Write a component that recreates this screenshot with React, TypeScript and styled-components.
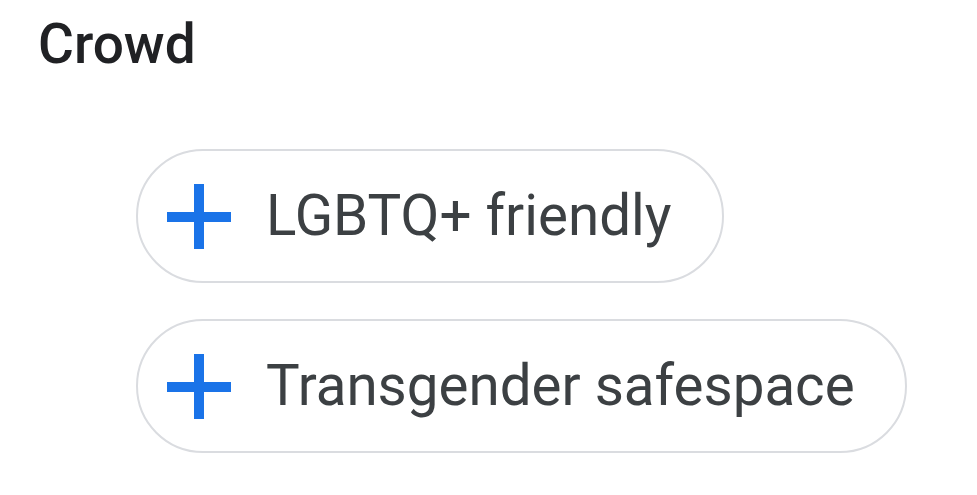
import styled, { createGlobalStyle } from "styled-components";

const GlobalStyle = createGlobalStyle`
    body {
        margin: 0;
        background: #fff;
        font-family: Roboto, "Noto Sans", Arial, sans-serif;
    }
`

const Page = styled.div`
    padding: 17px 0 0 38px;
`

const Heading = styled.h2`
    margin: 0;
    font-size: 55px;
    line-height: 55px;
    font-weight: 500;
    color: #202124;
`

const ChipList = styled.div`
    display: flex;
    flex-direction: column;
    align-items: flex-start;
    gap: 36px;
    margin: 77px 0 0 98px;
`

const Chip = styled.button`
    display: inline-flex;
    align-items: center;
    gap: 35px;
    box-sizing: border-box;
    height: 134px;
    padding: 0 50px 0 29px;
    border: 2px solid #dadce0;
    border-radius: 67px;
    background: #fff;
    font-family: Roboto, "Noto Sans", Arial, sans-serif;
    font-size: 56.5px;
    color: #3c4043;
    cursor: pointer;
`

const PlusIcon = () => (
    <svg width="64" height="65" viewBox="0 0 64 65">
        <rect x="27" y="0" width="10" height="65" fill="#1a73e8" />
        <rect x="0" y="28" width="64" height="10" fill="#1a73e8" />
    </svg>
)

const tags = ["LGBTQ+ friendly", "Transgender safespace"];

export default function App() {
    return (
        <Page>
            <GlobalStyle />
            <Heading>Crowd</Heading>
            <ChipList>
                {tags.map((t) => (
                    <Chip key={t}>
                        <PlusIcon />
                        <span>{t}</span>
                    </Chip>
                ))}
            </ChipList>
        </Page>
    );
}
